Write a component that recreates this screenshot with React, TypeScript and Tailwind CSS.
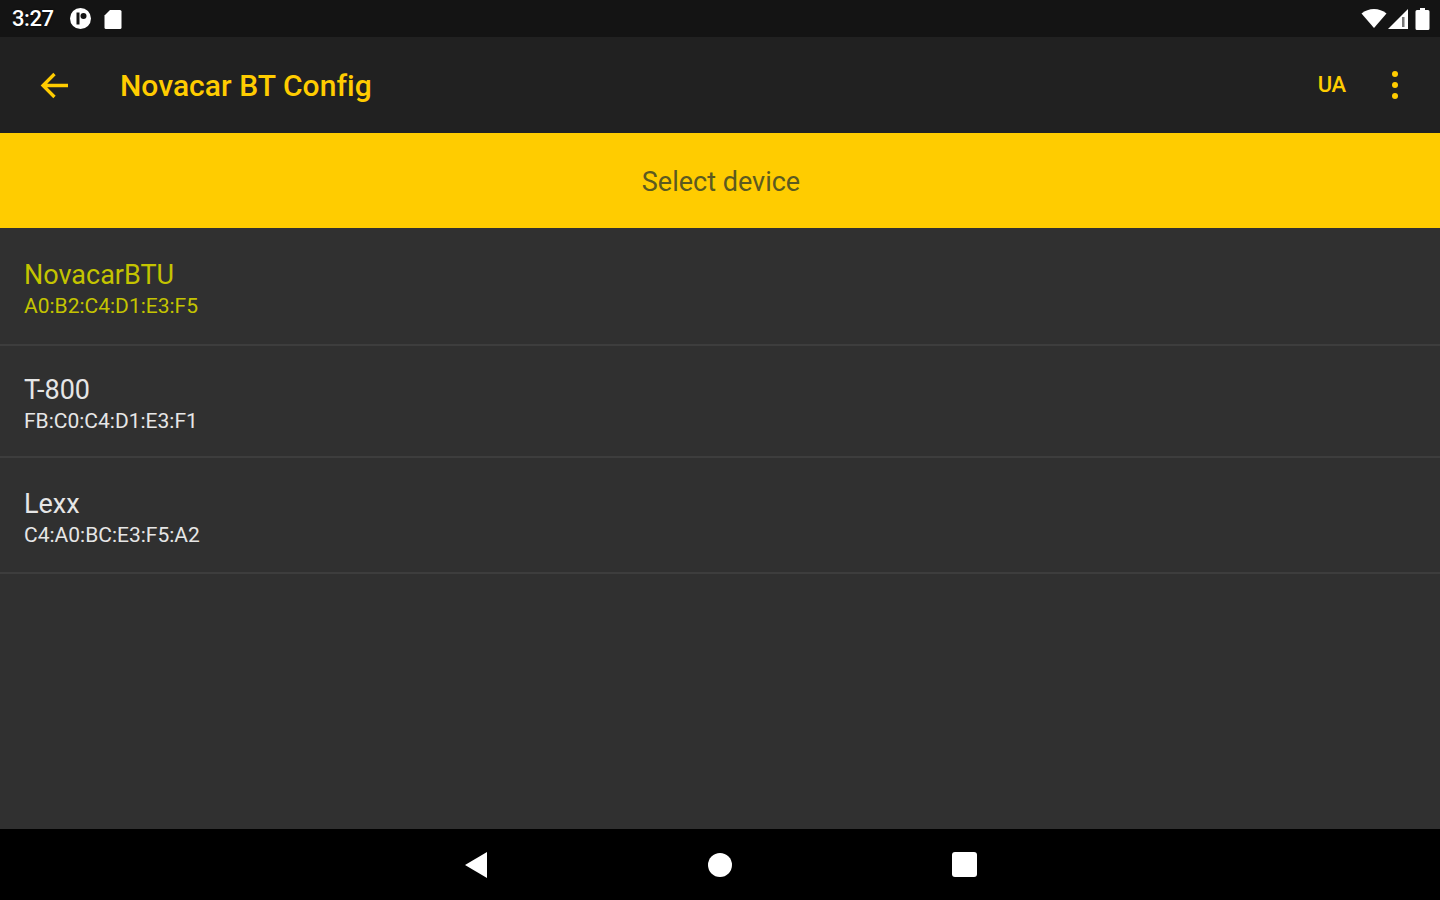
import React from "react";

const devices = [
  { name: "NovacarBTU", mac: "A0:B2:C4:D1:E3:F5", active: true, height: "h-[118px]" },
  { name: "T-800", mac: "FB:C0:C4:D1:E3:F1", active: false, height: "h-[112px]" },
  { name: "Lexx", mac: "C4:A0:BC:E3:F5:A2", active: false, height: "h-[116px]" },
];

function StatusBar() {
  return (
    <div className="flex h-[37px] shrink-0 items-center justify-between bg-[#141414] pl-[12px] pr-[10px] text-white">
      <div className="flex items-center">
        <span className="text-[22px] font-medium leading-none tracking-[-0.4px] [text-shadow:0_0_2px_#000]">3:27</span>
        <svg className="ml-[15px]" width="23" height="23" viewBox="0 0 23 23">
          <circle cx="11.5" cy="11.5" r="10.5" fill="#fff" />
          <rect x="7.5" y="5.5" width="3" height="12" fill="#141414" />
          <circle cx="14.5" cy="9" r="3" fill="#141414" />
        </svg>
        <svg className="ml-[12px]" width="18" height="20" viewBox="0 0 18 20">
          <path d="M6 1h10a1.5 1.5 0 0 1 1.5 1.5v16a1.5 1.5 0 0 1-1.5 1.5H2a1.5 1.5 0 0 1-1.5-1.5V6.500z" fill="#fff" />
        </svg>
      </div>
      <div className="flex items-center">
        <svg width="26" height="21" viewBox="0 0 26 21">
          <path d="M0.500 5.500C4 2.500 8.500 1 13 1s9 1.500 12.500 4.500L13 20z" fill="#fff" />
        </svg>
        <svg width="20" height="22" viewBox="0 0 20 22" className="ml-[1px]">
          <path d="M0 21L20 1v20z" fill="#fff" />
          <rect x="14" y="9" width="2.500" height="10" fill="#777" />
        </svg>
        <svg width="15" height="22" viewBox="0 0 15 22" className="ml-[7px]">
          <path d="M5 0h5v2h3a1.500 1.500 0 0 1 1.500 1.500v17a1.500 1.500 0 0 1-1.500 1.500H2a1.500 1.500 0 0 1-1.500-1.500v-17A1.500 1.500 0 0 1 2 2h3z" fill="#fff" />
        </svg>
      </div>
    </div>
  );
}

function Toolbar() {
  return (
    <div className="flex h-[96px] shrink-0 items-center bg-[#212121] text-[#ffcc00]">
      <svg className="ml-[40px]" width="29" height="29" viewBox="0 0 29 29" fill="none" stroke="#ffcc00" strokeWidth="3.300">
        <path d="M28 14.500H3M14.500 3L3 14.500 14.500 26" />
      </svg>
      <h1 className="ml-[51px] mt-[1px] text-[30px] font-medium leading-none tracking-[0.05px]">Novacar BT Config</h1>
      <span className="ml-auto text-[22px] font-medium leading-none tracking-[-0.2px]">UA</span>
      <div className="ml-[46px] mr-[42px] flex flex-col gap-[5px]">
        <span className="h-[6px] w-[6px] rounded-full bg-[#ffcc00]" />
        <span className="h-[6px] w-[6px] rounded-full bg-[#ffcc00]" />
        <span className="h-[6px] w-[6px] rounded-full bg-[#ffcc00]" />
      </div>
    </div>
  );
}

function DeviceRow({ name, mac, active, height }: (typeof devices)[number]) {
  return (
    <div className={`flex ${height} flex-col justify-center border-b-2 border-[#3d3d3d] px-6 pt-[7px] ${active ? "text-[#c4c400]" : "text-[#e6e6e6]"}`}>
      <div className="text-[27px] leading-[33px]">{name}</div>
      <div className="mt-[1px] text-[21px] leading-[27px]">{mac}</div>
    </div>
  );
}

function NavBar() {
  return (
    <div className="flex h-[71px] shrink-0 items-center justify-center gap-[220px] bg-black">
      <svg width="24" height="28" viewBox="0 0 24 28">
        <path d="M1 14L23 1v26z" fill="#fff" />
      </svg>
      <span className="h-[24px] w-[24px] rounded-full bg-white" />
      <span className="h-[25px] w-[25px] rounded-[3px] bg-white" />
    </div>
  );
}

export default function App() {
  return (
    <div className="flex h-[900px] w-[1440px] flex-col overflow-hidden bg-[#303030] font-['Roboto',sans-serif]">
      <StatusBar />
      <Toolbar />
      <div className="flex h-[95px] shrink-0 items-center justify-center bg-[#ffcc00] pl-[2px] pt-[4px] text-[27px] text-[#5c5a20]">
        Select device
      </div>
      <div className="flex-1">
        {devices.map(device => (
          <DeviceRow key={device.name} {...device} />
        ))}
      </div>
      <NavBar />
    </div>
  );
}
